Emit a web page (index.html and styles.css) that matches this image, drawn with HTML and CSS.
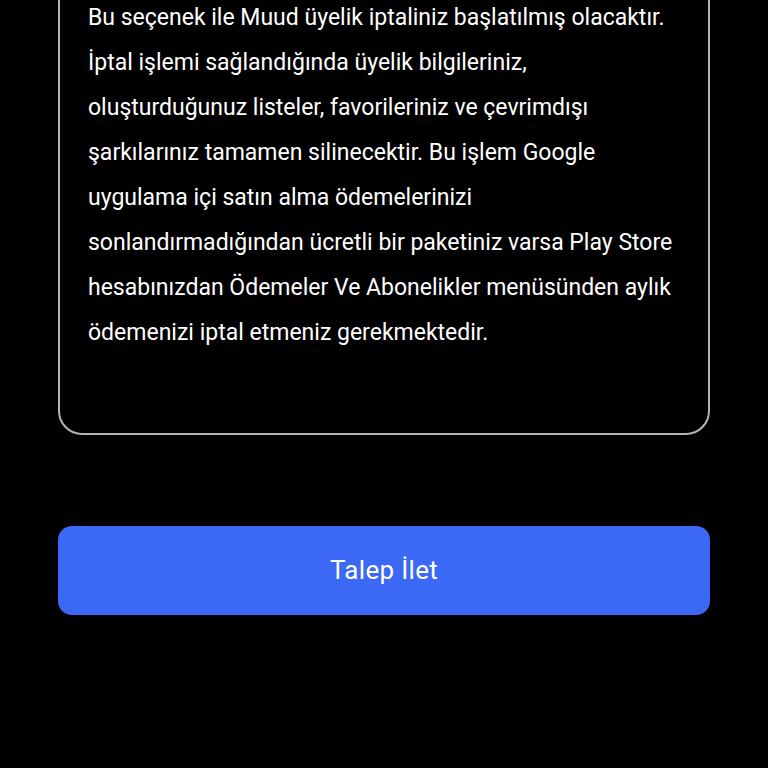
FILE: index.html
```html
<!DOCTYPE html>
<html lang="tr">
<head>
<meta charset="utf-8">
<link rel="stylesheet" href="styles.css">
</head>
<body>
<main class="page">
  <section class="card">
    <p class="notice">Bu seçenek ile Muud üyelik iptaliniz başlatılmış olacaktır.<br>İptal işlemi sağlandığında üyelik bilgileriniz,<br>oluşturduğunuz listeler, favorileriniz ve çevrimdışı<br>şarkılarınız tamamen silinecektir. Bu işlem Google<br>uygulama içi satın alma ödemelerinizi<br>sonlandırmadığından ücretli bir paketiniz varsa Play Store<br>hesabınızdan Ödemeler Ve Abonelikler menüsünden aylık<br>ödemenizi iptal etmeniz gerekmektedir.</p>
  </section>
  <button class="submit">Talep İlet</button>
</main>
</body>
</html>
```
FILE: styles.css
```css
html, body {
  margin: 0;
  padding: 0;
  background: #000;
  height: 100%;
  overflow: hidden;
}
.page {
  padding: 0 58px;
  display: flex;
  flex-direction: column;
  font-family: Roboto, "Noto Sans", sans-serif;
}
.card {
  margin-top: -30px;
  border: 2px solid #b4b4b4;
  border-radius: 24px;
  padding: 22.5px 10px 78px 28px;
}
.notice {
  margin: 0;
  color: #fff;
  font-size: 23px;
  line-height: 45px;
  white-space: nowrap;
}
.submit {
  margin-top: 91px;
  height: 89px;
  border: none;
  border-radius: 14px;
  background: #3b68f5;
  color: #fff;
  font-family: Roboto, "Noto Sans", sans-serif;
  font-size: 26px;
  letter-spacing: 0.3px;
  padding: 0;
}
```
